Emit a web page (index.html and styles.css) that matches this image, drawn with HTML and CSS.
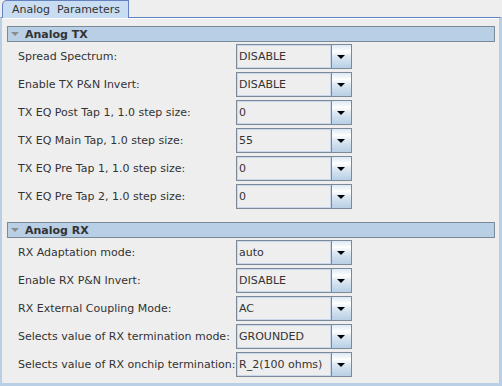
FILE: index.html
```html
<!DOCTYPE html>
<html lang="en">
<head>
  <meta charset="UTF-8">
  <title>Analog Parameters</title>
  <link rel="stylesheet" href="styles.css">
</head>
<body>
  <div class="tabpane">
    <div class="tabbar">
      <div class="tab">Analog&nbsp; Parameters</div>
    </div>
    <div class="panel">

      <div class="section">
        <div class="section-head"><span class="caret"></span>Analog TX</div>
        <div class="rows">
          <label class="row-label">Spread Spectrum:</label>
          <div class="combo"><span class="combo-value">DISABLE</span><span class="combo-btn"></span></div>
          <label class="row-label">Enable TX P&amp;N Invert:</label>
          <div class="combo"><span class="combo-value">DISABLE</span><span class="combo-btn"></span></div>
          <label class="row-label">TX EQ Post Tap 1, 1.0 step size:</label>
          <div class="combo"><span class="combo-value">0</span><span class="combo-btn"></span></div>
          <label class="row-label">TX EQ Main Tap, 1.0 step size:</label>
          <div class="combo"><span class="combo-value">55</span><span class="combo-btn"></span></div>
          <label class="row-label">TX EQ Pre Tap 1, 1.0 step size:</label>
          <div class="combo"><span class="combo-value">0</span><span class="combo-btn"></span></div>
          <label class="row-label">TX EQ Pre Tap 2, 1.0 step size:</label>
          <div class="combo"><span class="combo-value">0</span><span class="combo-btn"></span></div>
        </div>
      </div>

      <div class="section">
        <div class="section-head"><span class="caret"></span>Analog RX</div>
        <div class="rows">
          <label class="row-label">RX Adaptation mode:</label>
          <div class="combo"><span class="combo-value">auto</span><span class="combo-btn"></span></div>
          <label class="row-label">Enable RX P&amp;N Invert:</label>
          <div class="combo"><span class="combo-value">DISABLE</span><span class="combo-btn"></span></div>
          <label class="row-label">RX External Coupling Mode:</label>
          <div class="combo"><span class="combo-value">AC</span><span class="combo-btn"></span></div>
          <label class="row-label">Selects value of RX termination mode:</label>
          <div class="combo"><span class="combo-value">GROUNDED</span><span class="combo-btn"></span></div>
          <label class="row-label">Selects value of RX onchip termination:</label>
          <div class="combo"><span class="combo-value">R_2(100 ohms)</span><span class="combo-btn"></span></div>
        </div>
      </div>

    </div>
  </div>
</body>
</html>
```

FILE: styles.css
```css
body {
  margin: 0;
  background: #eeeeee;
  font-family: "DejaVu Sans", sans-serif;
  font-size: 11px;
  color: #333333;
}

.tabpane {
  display: flex;
  flex-direction: column;
  height: 386px;
}

/* Tab strip */
.tabbar {
  display: flex;
  height: 17px;
}

.tab {
  position: relative; /* covers the panel's top line below it */
  z-index: 1;
  margin-left: 2px;
  width: 127px;
  height: 18px;
  padding-left: 9px;
  box-sizing: border-box;
  line-height: 17px;
  background: #c8ddf2;
  border: 1px solid #6382bf;
  border-bottom: none;
  border-top-left-radius: 5px 5px;
  white-space: nowrap;
}

/* Content area */
.panel {
  flex: 1;
  padding: 8px 4px 0 5px;
  border-top: 1px solid #6382bf;
  border-left: 2px solid #b8cfe5;
  border-right: 3px solid #b8cfe5;
  border-bottom: 3px solid #b8cfe5;
  box-shadow: inset 0 1px 0 #ffffff;
}

.section + .section {
  margin-top: 13px;
}

.section-head {
  display: flex;
  align-items: center;
  height: 16px;
  box-sizing: border-box;
  padding-left: 3px;
  background: #b8cfe5;
  border: 1px solid #7a8a99;
  font-weight: bold;
  color: #333333;
}

.caret {
  width: 0;
  height: 0;
  margin-right: 6px;
  border-left: 4px solid transparent;
  border-right: 4px solid transparent;
  border-top: 4px solid #8c8c8c;
}

.rows {
  display: grid;
  grid-template-columns: 218px 116px;
  grid-auto-rows: 25px;
  row-gap: 3px;
  align-items: center;
  padding: 2px 0 0 11px;
}

.row-label {
  white-space: nowrap;
}

/* Combo box */
.combo {
  display: flex;
  height: 25px;
}

.combo-value {
  flex: 1;
  display: flex;
  align-items: center;
  padding-left: 2px;
  border: 1px solid #7a8a99;
  box-shadow: inset 0 0 0 1px #c8d8ea;
  background: #eeeeee;
  white-space: nowrap;
}

.combo-btn {
  position: relative;
  width: 19px;
  border: 1px solid #7a8a99;
  border-left: none;
  background: linear-gradient(#dde8f3 0%, #ffffff 28%, #dde8f3 50%, #b8cfe5 100%);
}

.combo-btn::after {
  content: "";
  position: absolute;
  left: 5px;
  top: 10px;
  border-left: 4px solid transparent;
  border-right: 4px solid transparent;
  border-top: 4px solid #000000;
}
```
